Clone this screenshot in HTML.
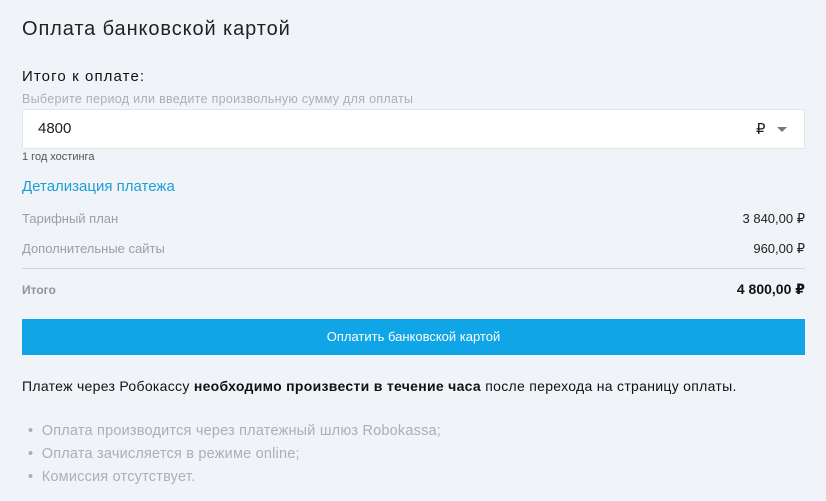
<!DOCTYPE html>
<html><head><meta charset="utf-8"><style>
*{margin:0;padding:0;box-sizing:border-box}
body{width:826px;height:501px;background:#f0f3f7;font-family:"Liberation Sans","DejaVu Sans",sans-serif;color:#222;position:relative;overflow:hidden}
.a{position:absolute;white-space:nowrap}
</style></head><body>
<div class="a" style="left:22px;top:18px;font-size:20px;letter-spacing:0.9px;color:#222">Оплата банковской картой</div>
<div class="a" style="left:22px;top:68px;font-size:15px;letter-spacing:1.1px;color:#111">Итого к оплате:</div>
<div class="a" style="left:22px;top:92px;font-size:12.5px;letter-spacing:0.3px;color:#aab0b6">Выберите период или введите произвольную сумму для оплаты</div>
<div class="a" style="left:22px;top:109px;width:783px;height:40px;background:#fff;border:1px solid #e3e6ea"></div>
<div class="a" style="left:38px;top:120px;font-size:15px;color:#222">4800</div>
<div class="a" style="left:756px;top:120px;font-size:15px;color:#222">₽</div>
<div class="a" style="left:777px;top:127px;width:0;height:0;border-left:5px solid transparent;border-right:5px solid transparent;border-top:5px solid #777"></div>
<div class="a" style="left:22px;top:151px;font-size:11px;color:#555">1 год хостинга</div>
<div class="a" style="left:22px;top:178px;font-size:15px;color:#1f9fd8">Детализация платежа</div>
<div class="a" style="left:22px;top:211px;font-size:13px;color:#9a9fa5">Тарифный план</div>
<div class="a" style="right:21px;top:211px;font-size:13px;color:#222">3 840,00 ₽</div>
<div class="a" style="left:22px;top:241px;font-size:13px;color:#9a9fa5">Дополнительные сайты</div>
<div class="a" style="right:21px;top:241px;font-size:13px;color:#222">960,00 ₽</div>
<div class="a" style="left:22px;top:268px;width:783px;height:1px;background:#d2d6da"></div>
<div class="a" style="left:22px;top:283px;font-size:12px;font-weight:bold;color:#8f949a">Итого</div>
<div class="a" style="right:21px;top:281px;font-size:14px;font-weight:bold;color:#111">4 800,00 ₽</div>
<div class="a" style="left:22px;top:319px;width:783px;height:36px;background:#10a5e6;color:#fff;font-size:13px;text-align:center;line-height:36px">Оплатить банковской картой</div>
<div class="a" style="left:22px;top:378px;font-size:14px;letter-spacing:0.3px;color:#111">Платеж через Робокассу <b>необходимо произвести в течение часа</b> после перехода на страницу оплаты.</div>
<div class="a" style="left:28px;top:420px;font-size:14.5px;letter-spacing:0.2px;color:#aab0b6;line-height:23px">• &nbsp;Оплата производится через платежный шлюз Robokassa;<br>• &nbsp;Оплата зачисляется в режиме online;<br>• &nbsp;Комиссия отсутствует.</div>
</body></html>
